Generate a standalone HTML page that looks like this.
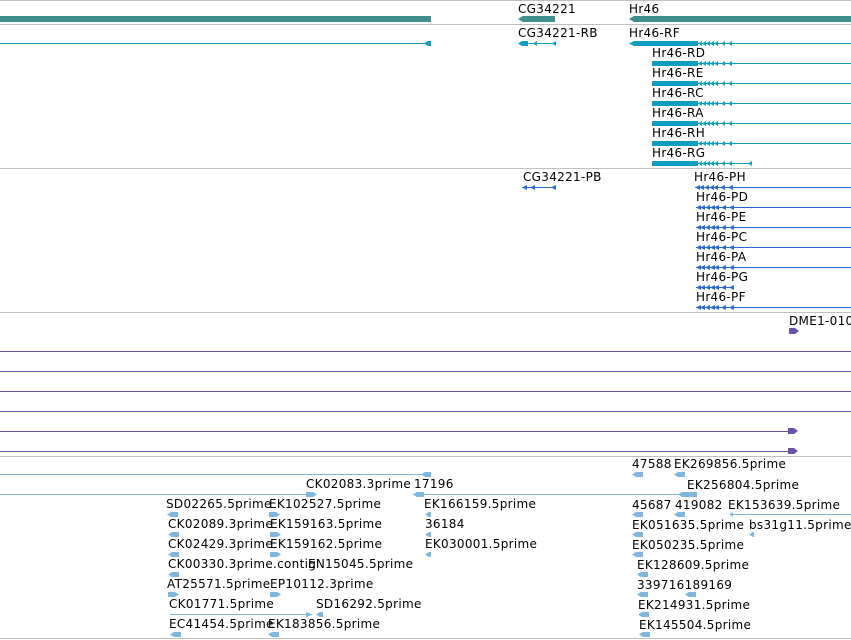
<!DOCTYPE html>
<html><head><meta charset="utf-8"><style>
html,body{margin:0;padding:0;background:#fff;width:851px;height:640px;overflow:hidden}
svg text{font-family:"DejaVu Sans","Liberation Sans",sans-serif;font-size:12px;fill:#000;letter-spacing:0.3px}
</style></head><body>
<svg width="851" height="640" viewBox="0 0 851 640" xmlns="http://www.w3.org/2000/svg">
<defs>
<g id="tarr" fill="#0f9ec0">
<polygon points="0,2.5 4,0 4,5"/><polygon points="4,2.5 8,0 8,5"/><polygon points="8,2.5 12,0 12,5"/><polygon points="12,2.5 16,0 16,5"/><polygon points="16,2.5 20,0 20,5"/><polygon points="23,2.5 27,0 27,5"/><polygon points="30,2.5 34,0 34,5"/>
<rect x="0" y="2" width="34" height="1"/>
</g>
<g id="parr" fill="#2a6bd0">
<polygon points="0,2.5 5,0 5,5"/><polygon points="4,2.5 9,0 9,5"/><polygon points="9,2.5 14,0 14,5"/><polygon points="14,2.5 19,0 19,5"/><polygon points="18,2.5 23,0 23,5"/><polygon points="25,2.5 30,0 30,5"/><polygon points="33,2.5 38,0 38,5"/>
<rect x="0" y="2" width="38" height="1"/>
</g>
<polygon id="el" points="0,2.5 4,0 11,0 11,5 4,5" fill="#7fb6dd"/>
<polygon id="er" points="0,0 7,0 11,2.5 7,5 0,5" fill="#7fb6dd"/>
</defs>
<g fill="#c0c0c0">
<rect x="0" y="0" width="851" height="1"/><rect x="0" y="24" width="851" height="1"/><rect x="0" y="168" width="851" height="1"/><rect x="0" y="312" width="851" height="1"/><rect x="0" y="456" width="851" height="1"/><rect x="0" y="638" width="851" height="1"/>
</g>
<rect x="0" y="16" width="431" height="6" fill="#3f8f8f"/>
<polygon points="518,19 523,16 555,16 555,22 523,22" fill="#3f8f8f"/>
<polygon points="629,19 634,16 851,16 851,22 634,22" fill="#3f8f8f"/>
<text x="518" y="13">CG34221</text><text x="629" y="13">Hr46</text>
<rect x="0" y="43" width="426" height="1" fill="#0f9ec0"/>
<polygon points="424,43.5 428,41 431,41 431,46 428,46" fill="#0f9ec0"/>
<text x="518" y="37">CG34221-RB</text>
<polygon points="518,43.5 522,41 528,41 528,46 522,46" fill="#0f9ec0"/>
<polygon points="533,43.5 537,41 537,46" fill="#0f9ec0"/><polygon points="552,43.5 556,41 556,46" fill="#0f9ec0"/>
<rect x="528" y="43" width="28" height="1" fill="#0f9ec0"/>
<text x="629" y="37">Hr46-RF</text>
<polygon points="629,43.5 634,41 698,41 698,46 634,46" fill="#0f9ec0"/><use href="#tarr" x="698" y="41"/><rect x="732" y="43" width="119" height="1" fill="#0f9ec0"/>
<g fill="#0f9ec0">
<text x="652" y="57">Hr46-RD</text><rect x="652" y="61" width="46" height="5"/><use href="#tarr" x="698" y="61"/><rect x="732" y="63" width="119" height="1"/>
<text x="652" y="77">Hr46-RE</text><rect x="652" y="81" width="46" height="5"/><use href="#tarr" x="698" y="81"/><rect x="732" y="83" width="119" height="1"/>
<text x="652" y="97">Hr46-RC</text><rect x="652" y="101" width="46" height="5"/><use href="#tarr" x="698" y="101"/><rect x="732" y="103" width="119" height="1"/>
<text x="652" y="117">Hr46-RA</text><rect x="652" y="121" width="46" height="5"/><use href="#tarr" x="698" y="121"/><rect x="732" y="123" width="119" height="1"/>
<text x="652" y="137">Hr46-RH</text><rect x="652" y="141" width="46" height="5"/><use href="#tarr" x="698" y="141"/><rect x="732" y="143" width="119" height="1"/>
<text x="652" y="157">Hr46-RG</text><rect x="652" y="161" width="46" height="5"/><use href="#tarr" x="698" y="161"/><rect x="732" y="163" width="20" height="1"/><polygon points="748,163.5 752,161 752,166"/>
</g>
<text x="523" y="181">CG34221-PB</text>
<g fill="#2a6bd0">
<polygon points="522,187.5 527,185 527,190"/><polygon points="530,187.5 535,185 535,190"/><polygon points="551,187.5 556,185 556,190"/><rect x="522" y="187" width="34" height="1"/>
<text x="694" y="181">Hr46-PH</text><use href="#parr" x="695" y="185"/><rect x="733" y="187" width="118" height="1"/>
<text x="696" y="201">Hr46-PD</text><use href="#parr" x="696" y="205"/><rect x="733" y="207" width="118" height="1"/>
<text x="696" y="221">Hr46-PE</text><use href="#parr" x="696" y="225"/><rect x="733" y="227" width="118" height="1"/>
<text x="696" y="241">Hr46-PC</text><use href="#parr" x="696" y="245"/><rect x="733" y="247" width="118" height="1"/>
<text x="696" y="261">Hr46-PA</text><use href="#parr" x="696" y="265"/><rect x="733" y="267" width="118" height="1"/>
<text x="696" y="281">Hr46-PG</text><use href="#parr" x="696" y="285"/>
<text x="696" y="301">Hr46-PF</text><use href="#parr" x="696" y="305"/><rect x="733" y="307" width="118" height="1"/>
</g>
<text x="789" y="325">DME1-010</text>
<g fill="#6b51a8">
<polygon points="789,328 795,328 799,331 795,334 789,334"/>
<rect x="0" y="351" width="851" height="1"/><rect x="0" y="371" width="851" height="1"/><rect x="0" y="391" width="851" height="1"/><rect x="0" y="411" width="851" height="1"/>
<rect x="0" y="431" width="790" height="1"/><polygon points="788,428 794,428 798,431 794,434 788,434"/>
<rect x="0" y="451" width="790" height="1"/><polygon points="788,448 794,448 798,451 794,454 788,454"/>
</g>
<g fill="#7fb6dd">
<rect x="0" y="474" width="428" height="1"/><polygon points="421,474.5 425,472 431,472 431,477 425,477"/>
<rect x="0" y="494" width="310" height="1"/><rect x="413" y="494" width="270" height="1"/><rect x="730" y="514" width="121" height="1"/>
<rect x="170" y="614" width="140" height="1"/>
</g>
<text x="306" y="488">CK02083.3prime</text><text x="414" y="488">17196</text>
<use href="#er" x="306" y="492"/><use href="#el" x="413" y="492"/>
<text x="166" y="508">SD02265.5prime</text><text x="269" y="508">EK102527.5prime</text><text x="424" y="508">EK166159.5prime</text>
<use href="#el" x="167" y="512"/><use href="#er" x="269" y="512"/><polygon points="425,514.5 429,512 431,512 431,517 429,517" fill="#7fb6dd"/>
<text x="168" y="528">CK02089.3prime</text><text x="270" y="528">EK159163.5prime</text><text x="425" y="528">36184</text>
<use href="#el" x="168" y="532"/><use href="#er" x="270" y="532"/><polygon points="425,534.5 429,532 431,532 431,537 429,537" fill="#7fb6dd"/>
<text x="168" y="548">CK02429.3prime</text><text x="270" y="548">EK159162.5prime</text><text x="425" y="548">EK030001.5prime</text>
<use href="#el" x="168" y="552"/><use href="#er" x="270" y="552"/><polygon points="425,554.5 429,552 431,552 431,557 429,557" fill="#7fb6dd"/>
<text x="168" y="568">CK00330.3prime.contig</text><text x="308" y="568">EN15045.5prime</text>
<use href="#el" x="168" y="572"/>
<text x="167" y="588">AT25571.5prime</text><text x="270" y="588">EP10112.3prime</text>
<use href="#er" x="168" y="592"/><use href="#er" x="270" y="592"/>
<text x="169" y="608">CK01771.5prime</text><text x="316" y="608">SD16292.5prime</text>
<polygon points="306,612 313,614.5 306,617" fill="#7fb6dd"/><polygon points="316,614.5 320,612 323,612 323,617 320,617" fill="#7fb6dd"/>
<text x="169" y="628">EC41454.5prime</text><text x="268" y="628">EK183856.5prime</text>
<use href="#el" x="170" y="632"/><use href="#el" x="268" y="632"/>
<text x="632" y="468">47588</text><text x="674" y="468">EK269856.5prime</text>
<use href="#el" x="632" y="472"/><use href="#el" x="674" y="472"/>
<text x="687" y="489">EK256804.5prime</text>
<use href="#el" x="678" y="492"/><use href="#el" x="686" y="492"/>
<text x="632" y="509">45687</text><text x="675" y="509">419082</text><text x="728" y="509">EK153639.5prime</text>
<use href="#el" x="632" y="512"/><use href="#el" x="674" y="512"/><polygon points="729,514.5 733,512 733,517" fill="#7fb6dd"/>
<text x="632" y="529">EK051635.5prime</text><text x="749" y="529">bs31g11.5prime</text>
<use href="#el" x="632" y="532"/><polygon points="749,534.5 753,532 754,532 754,537 753,537" fill="#7fb6dd"/>
<text x="632" y="549">EK050235.5prime</text>
<use href="#el" x="632" y="552"/>
<text x="637" y="569">EK128609.5prime</text>
<use href="#el" x="637" y="572"/>
<text x="637" y="589">339716189169</text>
<use href="#el" x="637" y="592"/><use href="#el" x="685" y="592"/>
<text x="638" y="609">EK214931.5prime</text>
<use href="#el" x="638" y="612"/>
<text x="639" y="629">EK145504.5prime</text>
<use href="#el" x="639" y="632"/>
</svg>
</body></html>
